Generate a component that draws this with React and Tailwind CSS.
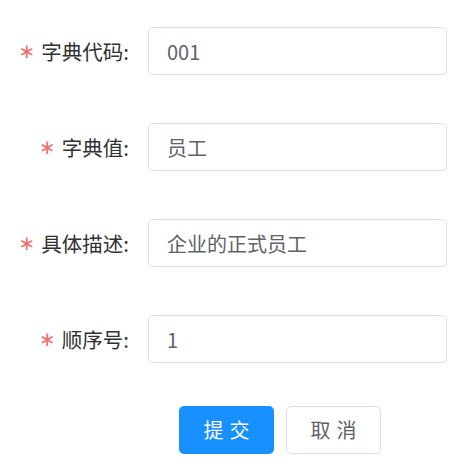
import React from "react";

const fields = [
  { label: "字典代码", value: "001" },
  { label: "字典值", value: "员工" },
  { label: "具体描述", value: "企业的正式员工" },
  { label: "顺序号", value: "1" },
];

export default function App() {
  return (
    <div
      className="w-[459px] h-[466px] bg-white pt-[27px]"
      style={{ fontFamily: '"Noto Sans CJK SC", "Noto Sans", sans-serif' }}
    >
      {fields.map((f) => (
        <div key={f.label} className="flex items-center h-[48px] mb-[48px]">
          <label className="w-[148px] pr-[19px] text-right text-[20.5px] text-[#303133] leading-none flex items-center justify-end">
            <span className="text-[#f56c6c] mr-[6px] text-[20px] font-['DejaVu_Sans'] leading-none">∗</span>
            {f.label}:
          </label>
          <input
            className="w-[299px] h-[48px] border border-[#dcdfe6] rounded-[5px] px-[18px] text-[20px] text-[#606266] outline-none"
            defaultValue={f.value}
          />
        </div>
      ))}
      <div className="flex gap-[12px] pl-[179px] mt-[-5px]">
        <button className="w-[95px] h-[48px] rounded-[5px] bg-[#1890ff] text-white text-[20px] tracking-[6px] pl-[6px]">
          提交
        </button>
        <button className="w-[95px] h-[48px] rounded-[5px] border border-[#dcdfe6] bg-white text-[#606266] text-[20px] tracking-[6px] pl-[6px]">
          取消
        </button>
      </div>
    </div>
  );
}
